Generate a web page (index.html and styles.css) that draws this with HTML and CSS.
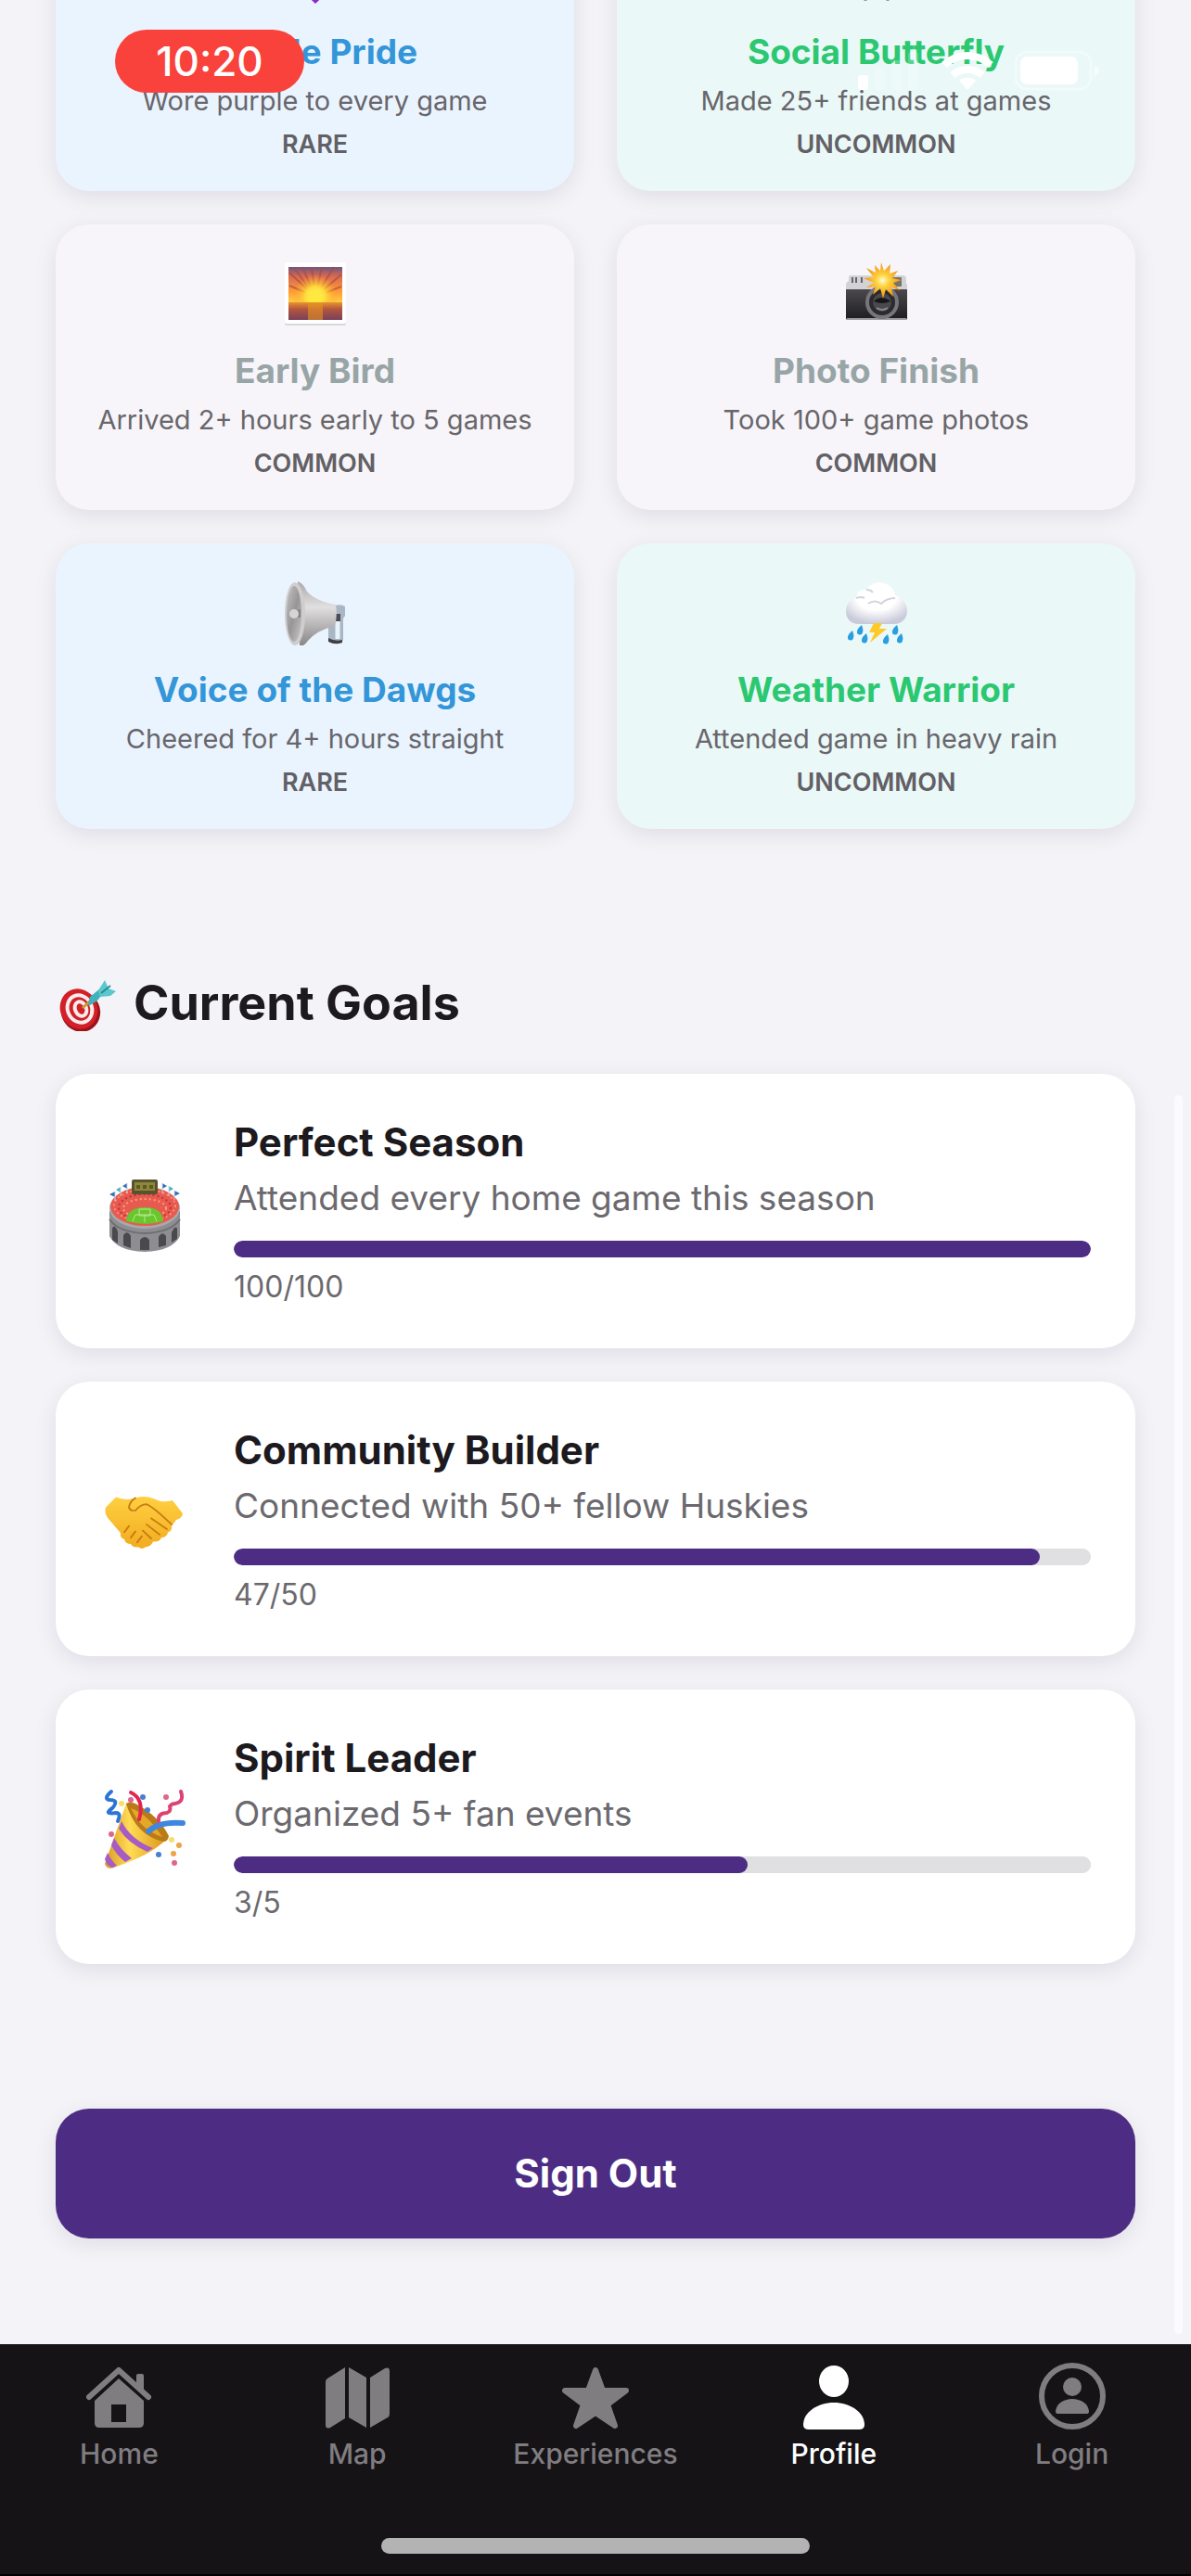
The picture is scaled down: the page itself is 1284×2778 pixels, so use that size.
FILE: index.html
```html
<!DOCTYPE html>
<html lang="en">
<head>
<meta charset="utf-8">
<meta name="viewport" content="width=device-width, initial-scale=1">
<title>Profile</title>
<link rel="stylesheet" href="styles.css">
</head>
<body>
<header class="status" aria-label="Status bar">
  <span class="status-time">10:20</span>
  <svg class="status-icons" viewBox="0 0 264 44" aria-hidden="true">
    <rect x="1" y="27" width="11" height="16" rx="3" fill="#fff"/>
    <g fill="#fff" opacity=".2"><rect x="19" y="20" width="11" height="23" rx="3"/><rect x="37" y="11" width="11" height="32" rx="3"/><rect x="55" y="2" width="11" height="41" rx="3"/></g>
    <g fill="none" stroke="#fff" stroke-width="8"><path d="M94 16a36 36 0 0 1 50 0"/><path d="M103 27a24 24 0 0 1 32 0"/></g>
    <path d="M119 43l-9-10a14 14 0 0 1 18 0z" fill="#fff"/>
    <rect x="171" y="2" width="81" height="40" rx="12" fill="none" stroke="#fff" stroke-width="3" opacity=".4"/>
    <rect x="176" y="7" width="62" height="30" rx="7" fill="#fff"/>
    <path d="M256 16q5 2 5 6t-5 6z" fill="#fff" opacity=".5"/>
  </svg>
</header>

<main class="content">
  <section class="badges" aria-label="Achievements">
    <article class="badge rare">
      <svg class="badge-icon" viewBox="0 0 72 72" aria-hidden="true"><path d="M36 68C22 54 6 44 6 26 6 6 30 2 36 18 42 2 66 6 66 26c0 18-16 28-30 42z" fill="#8a2bd2"/></svg>
      <h3 class="badge-title">Purple Pride</h3>
      <p class="badge-text">Wore purple to every game</p>
      <p class="badge-rank">RARE</p>
    </article>
    <article class="badge uncommon">
      <svg class="badge-icon" viewBox="0 0 72 72" aria-hidden="true"><path d="M36 30C26 8 4 6 5 18c1 10 5 16 12 20-8 4-6 12 3 20 6 5 14-4 16-12 2 8 10 17 16 12 9-8 11-16 3-20 7-4 11-10 12-20C68 6 46 8 36 30z" fill="#3f8fe0"/><path d="M24 56v9M48 56v9" stroke="#8d9a9c" stroke-width="3"/></svg>
      <h3 class="badge-title">Social Butterfly</h3>
      <p class="badge-text">Made 25+ friends at games</p>
      <p class="badge-rank">UNCOMMON</p>
    </article>
    <article class="badge common">
      <svg class="badge-icon" viewBox="0 0 72 72" aria-hidden="true">
        <defs>
          <linearGradient id="sky" x2="0" y2="1"><stop offset="0" stop-color="#6d5680"/><stop offset=".25" stop-color="#d8694f"/><stop offset=".65" stop-color="#ff9a34"/><stop offset="1" stop-color="#ffd447"/></linearGradient>
          <linearGradient id="sea" x2="0" y2="1"><stop offset="0" stop-color="#e8912e"/><stop offset=".4" stop-color="#b2553f"/><stop offset="1" stop-color="#79405a"/></linearGradient>
          <radialGradient id="sun"><stop offset="0" stop-color="#fff37a"/><stop offset=".45" stop-color="#ffdc3b"/><stop offset="1" stop-color="#ff9f2e" stop-opacity="0"/></radialGradient>
        </defs>
        <rect x="3" y="5" width="66" height="66" rx="2" fill="#d8d7dc"/>
        <rect x="3" y="3" width="66" height="66" rx="2" fill="#fff"/>
        <rect x="7" y="8" width="58" height="40" fill="url(#sky)"/>
        <g stroke="#a64a4c" stroke-width="2" opacity=".65"><path d="M36 40L22 8M36 40L32 8M36 40L43 8M36 40L56 8M36 40L8 14M36 40L64 16M36 40L8 28M36 40L64 29M36 40L13 9"/></g>
        <circle cx="36" cy="40" r="24" fill="url(#sun)"/>
        <circle cx="36" cy="41" r="8" fill="#ffe93f"/>
        <rect x="7" y="46" width="58" height="19" fill="url(#sea)"/>
        <rect x="28" y="46" width="16" height="19" fill="#e8951f" opacity=".6"/>
      </svg>
      <h3 class="badge-title">Early Bird</h3>
      <p class="badge-text">Arrived 2+ hours early to 5 games</p>
      <p class="badge-rank">COMMON</p>
    </article>
    <article class="badge common">
      <svg class="badge-icon" viewBox="0 0 72 72" aria-hidden="true">
        <defs>
          <linearGradient id="body" x2="0" y2="1"><stop offset="0" stop-color="#4b494d"/><stop offset="1" stop-color="#1d1c1f"/></linearGradient>
          <radialGradient id="flash"><stop offset="0" stop-color="#fffbd0"/><stop offset=".35" stop-color="#ffd23c"/><stop offset="1" stop-color="#f18f12"/></radialGradient>
        </defs>
        <path d="M6 19q0-2 2-2h56q4 0 4 3v6h1v8H3v-8q1-2 3-3z" fill="#d3d3d5"/>
        <path d="M10 19v6M14 19v6M20 19v6" stroke="#66656a" stroke-width="2"/>
        <rect x="51" y="19" width="12" height="10" rx="1" fill="#77736c"/>
        <path d="M3 32h66v31q0 2-2 2H5q-2 0-2-2z" fill="url(#body)"/>
        <path d="M4 64h64" stroke="#9b9a9e" stroke-width="2"/>
        <circle cx="42" cy="46" r="18" fill="#77777b"/>
        <circle cx="42" cy="46" r="14" fill="#2b2b2f"/>
        <circle cx="42" cy="46" r="10" fill="#49494e"/>
        <path d="M33 45q8-8 18 0-9 4-18 0z" fill="#17171a"/>
        <path d="M36 52q6 4 12 0" stroke="#8a8a90" stroke-width="2" fill="none"/>
        <path d="M41 3l3 9 7-7-1 10 9-3-6 8 10 2-9 3 7 8-9-3 2 10-8-8-3 10-3-11-8 7 3-9-10 1 8-5-11-5 11-1-8-10 10 5-1-8 6 6z" fill="url(#flash)"/>
      </svg>
      <h3 class="badge-title">Photo Finish</h3>
      <p class="badge-text">Took 100+ game photos</p>
      <p class="badge-rank">COMMON</p>
    </article>
    <article class="badge rare">
      <svg class="badge-icon" viewBox="0 0 72 72" aria-hidden="true">
        <defs>
          <linearGradient id="horn" x2="0" y2="1"><stop offset="0" stop-color="#aaa7a9"/><stop offset=".4" stop-color="#e2dfe0"/><stop offset="1" stop-color="#878487"/></linearGradient>
          <linearGradient id="bell" x2="1" y2="1"><stop offset="0" stop-color="#c6c3c4"/><stop offset=".5" stop-color="#989597"/><stop offset="1" stop-color="#c9c6c8"/></linearGradient>
        </defs>
        <path d="M57 29q7-2 11 1v10l-2 3v23q-1 3-8 3t-8-4V46l7-3z" fill="#a9b7c5"/>
        <path d="M60 44v21" stroke="#e8f2fa" stroke-width="5"/><path d="M50 64q7 4 15 2v3q-8 3-15-1z" fill="#3d3f44"/><path d="M57 38h6v8h-6z" fill="#4a4d53"/>
        <path d="M17 3q6 2 10 11 9 10 31 14 2 12-1 23-20 5-29 16-4 6-9 6z" fill="url(#horn)"/>
        <ellipse cx="14" cy="38" rx="11" ry="34" fill="#d0cdce"/>
        <ellipse cx="13" cy="38" rx="8" ry="30" fill="url(#bell)"/>
        <path d="M12 35l8-2v9l-8-1z" fill="#858285"/><circle cx="13" cy="38" r="5" fill="#d7d4d5"/>
      </svg>
      <h3 class="badge-title">Voice of the Dawgs</h3>
      <p class="badge-text">Cheered for 4+ hours straight</p>
      <p class="badge-rank">RARE</p>
    </article>
    <article class="badge uncommon">
      <svg class="badge-icon" viewBox="0 0 72 72" aria-hidden="true">
        <defs>
          <radialGradient id="cloud" cx=".5" cy=".35" r=".65"><stop offset=".5" stop-color="#fff"/><stop offset="1" stop-color="#c9cada"/></radialGradient>
          <path id="drop" d="M5 0q2 5 1 8a3 3 0 0 1-6-1q0-3 5-7z" fill="#2a9fe0"/>
        </defs>
        <path d="M17 49C7 49 3 42 3 35s5-13 11-14c1-7 5-10 11-9 3-5 8-8 14-8 9 0 16 6 17 14 8 3 13 9 13 17 0 8-6 14-14 14z" fill="url(#cloud)"/>
        <path d="M25 12q5 0 7 3M27 27q7-5 14 0 6-6 15-6M14 21q5-2 9 0" fill="none" stroke="#d2d3df" stroke-width="2"/>
        <path d="M33 48h9l-3 6h8L29 69l5-11h-6z" fill="#ffc928"/>
        <use href="#drop" x="15" y="50"/><use href="#drop" x="5" y="56"/><use href="#drop" x="20" y="59"/><use href="#drop" x="53" y="50"/><use href="#drop" x="43" y="60"/><use href="#drop" x="58" y="59"/>
      </svg>
      <h3 class="badge-title">Weather Warrior</h3>
      <p class="badge-text">Attended game in heavy rain</p>
      <p class="badge-rank">UNCOMMON</p>
    </article>
  </section>

  <section class="goals" aria-labelledby="goals-heading">
    <div class="goals-head">
      <svg class="goals-icon" viewBox="0 0 68 60" aria-hidden="true">
        <ellipse cx="27" cy="39" rx="21" ry="22" transform="rotate(-25 27 39)" fill="#9d1219"/>
        <ellipse cx="25" cy="36" rx="20" ry="22" transform="rotate(-25 25 36)" fill="#d21f28"/>
        <g fill="none" stroke="#f7ecec" stroke-width="4"><ellipse cx="26" cy="36" rx="13" ry="15" transform="rotate(-25 26 36)"/><ellipse cx="27" cy="36" rx="6" ry="8" transform="rotate(-25 27 36)"/></g>
        <path d="M29 35l13-12" stroke="#c79c35" stroke-width="3"/>
        <path d="M35 32l2-9 11-9 4 4-7 9-8 5z" fill="#3fb3bb"/>
        <path d="M46 16l7-11 4 9 8 3-6 5-11 1z" fill="#5bc8cc"/><path d="M49 19l10-8" stroke="#258c98" stroke-width="2"/>
      </svg>
      <h2 class="goals-title" id="goals-heading">Current Goals</h2>
    </div>

    <article class="goal">
      <svg class="goal-icon" viewBox="0 0 96 96" aria-hidden="true">
        <path d="M10 48v27q8 16 38 17 30-1 38-17V48z" fill="#8e8d91"/>
        <path d="M10 57q10 14 38 15 28-1 38-15" fill="none" stroke="#6f6e72" stroke-width="2"/>
        <g fill="#4a494d"><path d="M13 79V67q1-4 4-1l2 4v13zM25 85V74q4-6 8 1v13zM43 90V79q5-6 10 0v11zM63 87V76q4-7 8-1v10zM77 82V71l3-5q3-1 3 1v11z"/></g>
        <ellipse cx="48" cy="45" rx="38" ry="22" fill="#a9a8ac"/>
        <ellipse cx="48" cy="43" rx="37" ry="21" fill="#e75a4f"/>
        <g fill="none" stroke-dasharray="2 3" stroke-width="2"><ellipse cx="48" cy="42" rx="33" ry="17" stroke="#ff9078"/><ellipse cx="48" cy="44" rx="28" ry="14" stroke="#bd3039"/><ellipse cx="48" cy="45" rx="23" ry="10" stroke="#ff9c7c"/></g>
        <path d="M28 59q1-15 20-15t20 15q-18 6-40 0z" fill="#69c62d"/>
        <path d="M35 59l3-7h20l3 7M48 52v8M42 46h12v7H42z" fill="none" stroke="#b9eb95" stroke-width="1"/>
        <rect x="34" y="14" width="28" height="16" rx="2" fill="#57532f"/><rect x="37" y="17" width="22" height="9" fill="#8e8638"/><path d="M39 20h4v4h-4zm7 0h4v4h-4zm7 0h4v4h-4z" fill="#5d5829"/>
        <g fill="#2f6fbb"><path d="M16 27v6l-6-3zM29 18v6l-5-3zM67 18v6l5-3zM80 26v6l6-3z"/></g><g fill="#45b5b8"><path d="M22 22v6l-5-3zM74 21v6l5-3z"/></g>
        <path d="M16 27v10M22 22v10M29 18v11M67 18v11M74 21v11M80 26v10" stroke="#c9d5e2" stroke-width="1"/>
      </svg>
      <div class="goal-body">
        <h3 class="goal-title" id="goal-season">Perfect Season</h3>
        <p class="goal-text">Attended every home game this season</p>
        <progress class="goal-bar" aria-labelledby="goal-season" value="100" max="100"></progress>
        <p class="goal-count">100/100</p>
      </div>
    </article>

    <article class="goal">
      <svg class="goal-icon" viewBox="0 0 96 96" aria-hidden="true">
        <defs><linearGradient id="hand" x2="0" y2="1"><stop offset="0" stop-color="#ffd042"/><stop offset="1" stop-color="#f2ab1f"/></linearGradient></defs>
        <g transform="translate(0 12) scale(1 .84)">
          <path d="M6 28L17 15q11 5 21 1 10-4 20 1 9 6 20 2l11 17q-1 6-7 8l-5 8q1 6-4 8-1 6-7 7-2 6-9 5-2 6-8 7-4 4-8 0-6 1-8-4-6 0-7-6-5-2-4-8L9 43q-5-7-3-15z" fill="url(#hand)"/>
          <path d="M38 16q-6 4-7 12 1 5 7 4 6-8 12-8 8 4 27 26M55 42l17 14M50 50l14 13M46 58l9 10M26 60l5-8M33 67l5-8M40 73l5-8" fill="none" stroke="#c77c13" stroke-width="2" stroke-linecap="round"/>
        </g>
      </svg>
      <div class="goal-body">
        <h3 class="goal-title" id="goal-community">Community Builder</h3>
        <p class="goal-text">Connected with 50+ fellow Huskies</p>
        <progress class="goal-bar" aria-labelledby="goal-community" value="47" max="50"></progress>
        <p class="goal-count">47/50</p>
      </div>
    </article>

    <article class="goal">
      <svg class="goal-icon" viewBox="0 0 96 96" aria-hidden="true">
        <defs><linearGradient id="cone" x2="1" y2="0"><stop offset="0" stop-color="#d99b25"/><stop offset=".4" stop-color="#ffdc55"/><stop offset="1" stop-color="#dc9419"/></linearGradient></defs>
        <path d="M28 23q22 7 44 38Q54 79 17 91q-9 5-12-3z" fill="url(#cone)"/>
        <path d="M28 23q3-3 10 0 25 13 36 35-1 6-6 6Q38 57 28 23z" fill="#b97a17"/>
        <path d="M33 28q18 6 34 31Q44 52 33 28z" fill="#e5a728"/>
        <path d="M23 42q10 20 34 29l-6 4Q30 66 20 50zM15 60q7 13 19 22l-7 4Q17 78 12 68zM8 76q3 7 10 14l-5 2q-6-2-8-9z" fill="#a75bc5"/>
        <g fill="none" stroke-linecap="round" stroke-width="4"><path d="M33 11q15 7 9 29" stroke="#e2254e"/><path d="M52 53q11-11 37-9" stroke="#3e86df" stroke-width="6"/><path d="M12 10q-9 8-2 9 11 0 3 9-10 7 4 5 6 0 2 9" stroke="#2c74d5"/><path d="M87 10q4 11-6 13-4 0-6 3 2 5-3 7-10 0-9 9" stroke="#dd4273"/></g>
        <g fill="#477fd2"><circle cx="46" cy="16" r="3"/><circle cx="51" cy="30" r="3"/><circle cx="63" cy="78" r="3"/></g><g fill="#df668a"><circle cx="71" cy="16" r="3"/><circle cx="12" cy="56" r="3"/><circle cx="80" cy="87" r="3"/><circle cx="33" cy="19" r="3"/></g><g fill="#eda34c"><circle cx="85" cy="68" r="3"/><circle cx="79" cy="77" r="3"/></g><g fill="#f5df68"><circle cx="23" cy="23" r="3"/><circle cx="77" cy="62" r="3"/></g>
      </svg>
      <div class="goal-body">
        <h3 class="goal-title" id="goal-spirit">Spirit Leader</h3>
        <p class="goal-text">Organized 5+ fan events</p>
        <progress class="goal-bar" aria-labelledby="goal-spirit" value="3" max="5"></progress>
        <p class="goal-count">3/5</p>
      </div>
    </article>
  </section>

  <button class="sign-out" type="button">Sign Out</button>
  <div class="scroll-thumb" aria-hidden="true"></div>
</main>

<footer class="tabbar">
  <nav class="tabs" aria-label="Main">
    <a class="tab" href="#home">
      <svg class="tab-icon" viewBox="0 0 72 72" aria-hidden="true"><path d="M4 37L36 8l32 29" fill="none" stroke="currentColor" stroke-width="6" stroke-linecap="round" stroke-linejoin="round"/><path d="M55 14q0-2 2-2h4q2 0 2 2v18l-8-8z" fill="currentColor"/><path fill="currentColor" fill-rule="evenodd" d="M36 17l27 24v24q0 5-5 5H15q-5 0-5-5V41zM28 45v19h16V45z"/></svg>
      <span>Home</span>
    </a>
    <a class="tab" href="#map">
      <svg class="tab-icon" viewBox="0 0 72 72" aria-hidden="true"><path fill="currentColor" d="M2 21q0-3 2-4L23 5v55L7 70q-5 2-5-3zM27 5l19 11v54L27 59zM50 16L66 6q5-2 5 3v46q0 3-2 4L50 70z"/></svg>
      <span>Map</span>
    </a>
    <a class="tab" href="#experiences">
      <svg class="tab-icon" viewBox="0 0 72 72" aria-hidden="true"><path fill="currentColor" stroke="currentColor" stroke-width="6" stroke-linejoin="round" d="M36 8l8 22h25L49 45l8 23-21-14-21 14 8-23L3 30h25z"/></svg>
      <span>Experiences</span>
    </a>
    <a class="tab active" href="#profile" aria-current="page">
      <svg class="tab-icon" viewBox="0 0 72 72" aria-hidden="true"><ellipse cx="36" cy="20" rx="16" ry="17" fill="currentColor"/><path fill="currentColor" d="M9 72q-6 0-6-5C3 53 19 43 36 43s33 10 33 24q0 5-6 5z"/></svg>
      <span>Profile</span>
    </a>
    <a class="tab" href="#login">
      <svg class="tab-icon" viewBox="0 0 72 72" aria-hidden="true"><circle cx="36" cy="36" r="33" fill="none" stroke="currentColor" stroke-width="6"/><circle cx="36" cy="26" r="10" fill="currentColor"/><path fill="currentColor" d="M20 55q-2 0-2-3c1-8 9-13 18-13s17 5 18 13q0 3-2 3z"/></svg>
      <span>Login</span>
    </a>
  </nav>
  <div class="home-indicator" aria-hidden="true"></div>
</footer>
</body>
</html>
```
FILE: styles.css
```css
* { box-sizing: border-box; margin: 0; padding: 0; }

html { background: #000; }

body {
  min-height: 100vh;
  display: flex;
  flex-direction: column;
  overflow-x: hidden;
  background: #f4f3f8;
  color: #1c1a1e;
  font-family: Inter, "Liberation Sans", sans-serif;
}

svg { display: block; flex: none; }

/* Status bar floats over the scrolled content */
.status {
  position: absolute;
  inset: 32px 96px auto 124px;
  z-index: 2;
  display: flex;
  justify-content: space-between;
  align-items: flex-start;
}

.status-time {
  width: 204px;
  border-radius: 34px;
  background: #f8423b;
  color: #fff;
  font-size: 44px;
  font-weight: 500;
  line-height: 68px;
  text-align: center;
}

.status-icons { width: 264px; height: 44px; margin-top: 22px; }

/* The page is scrolled, so its first row starts above the window */
.content {
  position: relative;
  flex: 1;
  margin-top: -102px;
  padding: 0 60px 114px;
}

.badges {
  display: grid;
  grid-template-columns: 1fr 1fr;
  gap: 36px 46px;
}

.badge, .goal, .sign-out {
  border-radius: 36px;
  box-shadow: 0 6px 24px rgba(20, 15, 30, .09);
}

.badge {
  display: flex;
  flex-direction: column;
  align-items: center;
  padding: 36px 24px 34px;
  text-align: center;
}

.badge-icon { width: 72px; height: 72px; margin: 2px 0; }

.badge-title {
  margin-top: 24px;
  font-size: 37px;
  font-weight: 700;
  line-height: 44px;
}

.badge-text {
  margin-top: 14px;
  color: #68666b;
  font-size: 29px;
  line-height: 34px;
}

.badge-rank {
  margin-top: 14px;
  color: #626065;
  font-size: 27px;
  font-weight: 600;
  line-height: 32px;
}

.rare { background: #eaf4ff; }
.rare .badge-title { color: #3396d8; }
.uncommon { background: #eaf8f8; }
.uncommon .badge-title { color: #2bc871; }
.common { background: #f7f5f9; }
.common .badge-title { color: #97a5a7; }

.goals {
  display: flex;
  flex-direction: column;
  gap: 36px;
  margin-top: 158px;
}

.goals-head {
  display: flex;
  align-items: center;
  gap: 16px;
  margin-bottom: 10px;
}

.goals-icon { width: 68px; height: 60px; }

.goals-title { font-size: 52px; font-weight: 700; line-height: 60px; }

.goal {
  display: flex;
  align-items: center;
  gap: 48px;
  padding: 48px;
  background: #fff;
}

.goal-icon { width: 96px; height: 96px; }

.goal-body { flex: 1; min-width: 0; }

.goal-title { font-size: 42px; font-weight: 700; line-height: 52px; }

.goal-text {
  margin-top: 12px;
  color: #6b696e;
  font-size: 37px;
  line-height: 44px;
}

.goal-bar {
  display: block;
  width: 100%;
  height: 18px;
  margin: 24px 0 14px;
  border: 0;
  border-radius: 9px;
  overflow: hidden;
  background: #e0dfe2;
  appearance: none;
}

.goal-bar::-webkit-progress-bar { background: #e0dfe2; border-radius: 9px; }
.goal-bar::-webkit-progress-value { background: #4d2d83; border-radius: 9px; }
.goal-bar::-moz-progress-bar { background: #4d2d83; border-radius: 9px; }

.goal-count { color: #6b696e; font-size: 32px; line-height: 36px; }

.sign-out {
  display: block;
  width: 100%;
  margin-top: 156px;
  padding: 44px;
  border: 0;
  background: #4d2d83;
  color: #fff;
  font-family: inherit;
  font-size: 42px;
  font-weight: 700;
  line-height: 52px;
}

.scroll-thumb {
  position: absolute;
  right: 9px;
  bottom: 11px;
  width: 9px;
  height: 1336px;
  border-radius: 5px;
  background: #fbfafe;
}

.tabbar {
  padding: 20px 0 22px;
  border-bottom: 2px solid #000;
  background: #151316;
}

.tabs { display: grid; grid-template-columns: repeat(5, 1fr); }

.tab {
  display: flex;
  flex-direction: column;
  align-items: center;
  gap: 8px;
  color: #807d81;
  font-size: 30px;
  font-weight: 500;
  line-height: 36px;
  text-decoration: none;
}

.tab.active { color: #fff; }

.tab-icon { width: 72px; height: 72px; }

.home-indicator {
  width: 36%;
  height: 17px;
  margin: 73px auto 0;
  border-radius: 9px;
  background: #b3b3b3;
}
```
